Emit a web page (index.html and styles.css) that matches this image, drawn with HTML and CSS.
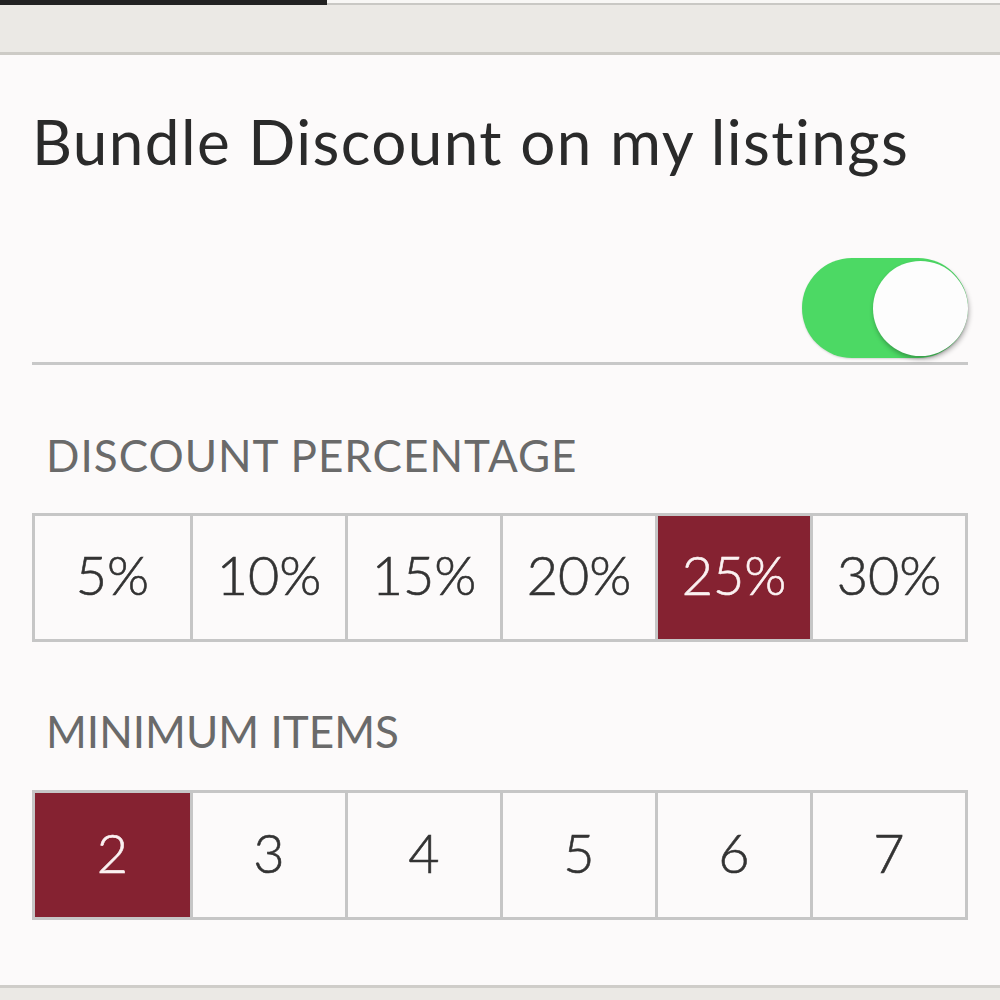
FILE: index.html
```html
<!DOCTYPE html>
<html>
<head>
<meta charset="utf-8">
<link rel="stylesheet" href="styles.css">
</head>
<body>
<div class="top">
  <div class="tab-ind"></div>
  <div class="tab-rest"></div>
</div>
<div class="band"></div>
<main class="card">
  <h1 class="title">Bundle Discount on my listings</h1>
  <div class="toggle-row">
    <div class="switch"><div class="knob"></div></div>
  </div>
  <h2 class="label">DISCOUNT PERCENTAGE</h2>
  <div class="seg">
    <div class="cell">5%</div>
    <div class="cell">10%</div>
    <div class="cell">15%</div>
    <div class="cell">20%</div>
    <div class="cell selected">25%</div>
    <div class="cell">30%</div>
  </div>
  <h2 class="label label-min">MINIMUM ITEMS</h2>
  <div class="seg seg-min">
    <div class="cell selected">2</div>
    <div class="cell">3</div>
    <div class="cell">4</div>
    <div class="cell">5</div>
    <div class="cell">6</div>
    <div class="cell">7</div>
  </div>
</main>
<div class="foot"></div>
</body>
</html>
```
FILE: styles.css
```css
* { box-sizing: border-box; }
html, body { margin: 0; padding: 0; }
body {
  background: #ebe9e5;
  font-family: Lato, "Noto Sans", sans-serif;
  width: 1000px;
}
.top { display: flex; height: 5px; }
.tab-ind { width: 327px; background: #222222; }
.tab-rest { flex: 1; background: #f8f7f5; border-bottom: 2px solid #c9c8c4; }
.band { height: 50px; background: #ebe9e5; border-bottom: 3px solid #cdcbc6; }
.card {
  background: #fcfafa;
  padding: 1px 32px 0 32px;
  height: 933px;
  border-bottom: 3px solid #cfcdc9;
}
.title {
  margin: 50px 0 0 0;
  font-size: 62px;
  font-weight: 400;
  letter-spacing: 1.4px;
  line-height: 70px;
  color: #2a2a2a;
}
.toggle-row {
  display: flex;
  justify-content: flex-end;
  margin-top: 82px;
  padding-bottom: 4px;
  border-bottom: 3px solid #c8c8c8;
}
.switch {
  width: 166px;
  height: 100px;
  border-radius: 50px;
  background: #4cd964;
  box-shadow: 0 1px 2px rgba(0,0,0,0.15);
  display: flex;
  align-items: center;
  justify-content: flex-end;
}
.knob {
  width: 95px;
  height: 95px;
  border-radius: 50%;
  background: #fdfdfd;
  box-shadow: 1px 3px 5px rgba(0,0,0,0.3);
}
.label {
  margin: 65px 0 0 14px;
  font-size: 44px;
  font-weight: 400;
  letter-spacing: 1px;
  line-height: 50px;
  color: #6a6a6a;
}
.label-min { margin-top: 64px; letter-spacing: 0; }
.seg {
  margin-top: 33px;
  display: grid;
  grid-template-columns: repeat(6, 1fr);
  height: 129px;
  border: 3px solid #c6c6c6;
}
.seg-min { margin-top: 34px; height: 130px; }
.cell {
  display: flex;
  align-items: center;
  justify-content: center;
  border-left: 3px solid #c6c6c6;
  font-size: 54px;
  font-weight: 300;
  color: #333333;
  -webkit-text-stroke: 0.6px currentColor;
  padding-bottom: 6px;
}
.cell:first-child { border-left: 0; }
.cell.selected { background: #852231; color: #fbf2f2; }
.foot { height: 12px; background: #ebe9e5; }
```
